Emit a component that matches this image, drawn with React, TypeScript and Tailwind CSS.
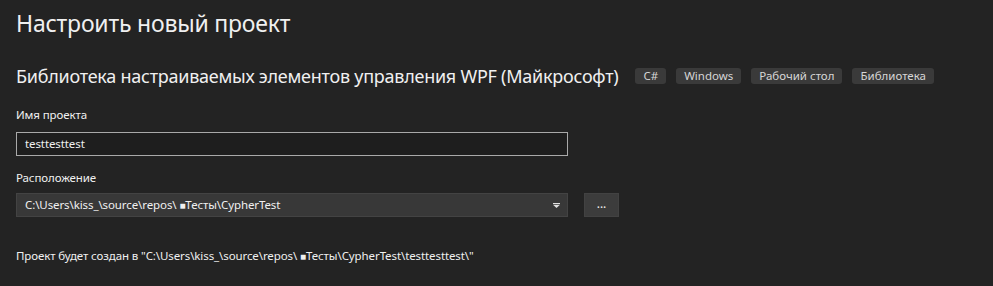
import React from "react";

const tags = ["C#", "Windows", "Рабочий стол", "Библиотека"];

const Tag = ({ label }: { label: string }) => (
  <span className="h-4 px-2 flex items-center rounded-[3px] bg-[#3a3a3a] text-[11.5px] leading-none text-[#d6d6d6]">
    {label}
  </span>
);

const App = () => {
  return (
    <div
      className="w-[993px] h-[286px] bg-[#232323] text-[#f0f0f0] pl-4 pt-[7px] overflow-hidden"
      style={{ fontFamily: '"Noto Sans", "Open Sans", sans-serif' }}
    >
      <h1 className="text-[23px] leading-[32px] font-normal tracking-[-0.2px]">Настроить новый проект</h1>

      <div className="flex items-center mt-[27px] h-[20px]">
        <h2 className="text-[18px] leading-[20px] font-normal tracking-[-0.25px]">
          Библиотека настраиваемых элементов управления WPF (Майкрософт)
        </h2>
        <div className="flex gap-[10px] ml-[17px]">
          {tags.map((t) => (
            <Tag key={t} label={t} />
          ))}
        </div>
      </div>

      <div className="mt-[21px] text-[11.5px] leading-[16px] tracking-[-0.1px]">Имя проекта</div>
      <div className="mt-[9px] w-[552px] h-[24px] border border-[#a9a9a9] bg-[#1e1e1e] flex items-center px-[8px] text-[11.5px] tracking-[-0.1px]">
        testtesttest
      </div>

      <div className="mt-[14px] text-[11.5px] leading-[16px] tracking-[-0.1px]">Расположение</div>
      <div className="mt-[7px] flex items-center gap-4">
        <div className="w-[552px] h-[24px] border border-[#434343] bg-[#383838] flex items-center pl-[8px] pr-[6px] text-[11.5px] tracking-[-0.1px]">
          <span className="flex-1">
            C:\Users\kiss_\source\repos\ <span className="text-[10px]">■</span>Тесты\CypherTest
          </span>
          <svg width="7" height="5" viewBox="0 0 7 5" className="mr-[1px] mt-[1px]">
            <rect x="0" y="0" width="7" height="1" fill="#e0e0e0" />
            <path d="M0 1.8 H7 L3.5 5 Z" fill="#e0e0e0" />
          </svg>
        </div>
        <button className="w-[35px] h-[24px] bg-[#3c3c3c] border border-[#424242] flex items-center justify-center text-[12px] leading-none pb-[3px]">
          ...
        </button>
      </div>

      <div className="mt-[31px] text-[11.5px] leading-[16px] tracking-[-0.1px]">
        Проект будет создан в "C:\Users\kiss_\source\repos\ <span className="text-[10px]">■</span>Тесты\CypherTest\testtesttest\"
      </div>
    </div>
  );
};

export default App;
